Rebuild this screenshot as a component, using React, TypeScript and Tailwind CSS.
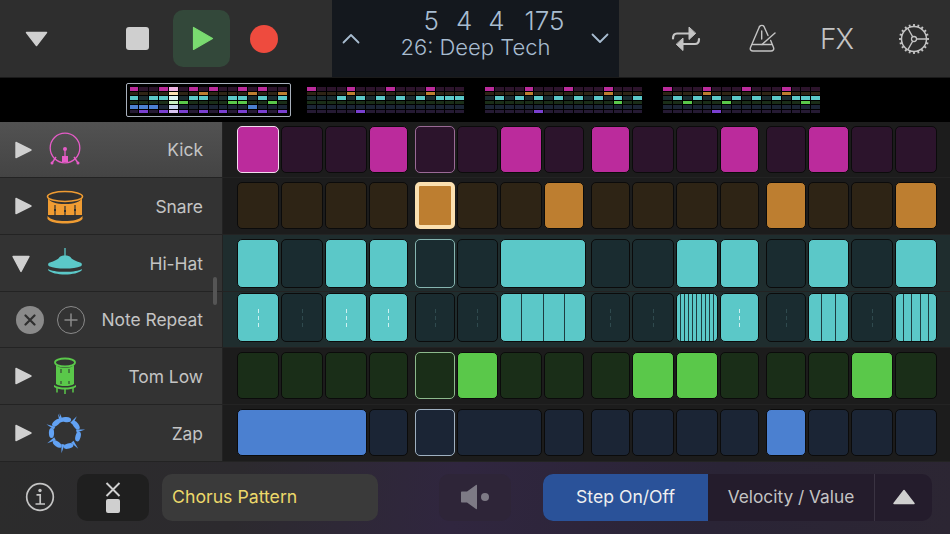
import React from "react";

type C = { on?: boolean; span?: number; sub?: number; sel?: boolean };

const themes = {
  kick: { on: "bg-[#bb2b9c]", off: "bg-[#2c142c]", ph: "border-[#9a6a96]" },
  snare: { on: "bg-[#bd7e30]", off: "bg-[#2e2415]", ph: "border-[#fbe0b0]" },
  hat: { on: "bg-[#5bc8c8]", off: "bg-[#1a2c30]", ph: "border-[#86b5b0]" },
  tom: { on: "bg-[#5ac84a]", off: "bg-[#1a2e18]", ph: "border-[#8cb98c]" },
  zap: { on: "bg-[#4b80d0]", off: "bg-[#1b2535]", ph: "border-[#9fb0c0]" },
};
type Theme = keyof typeof themes;

const groupCols = [
  "grid-cols-[42px_42px_42px_39px]",
  "grid-cols-[40px_41px_42px_40px]",
  "grid-cols-[39px_42px_42px_39px]",
  "grid-cols-[40px_41px_42px_42px]",
];

const spanClass: Record<number, string> = { 1: "", 2: "col-span-2", 3: "col-span-3" };

const on = (sub?: number): C => ({ on: true, sub });
const off = (sub?: number): C => ({ sub });

const rows: { theme: Theme; h: string; bg: string; pt: string; cellH: string; groups: C[][] }[] = [
  {
    theme: "kick", h: "h-[56px]", bg: "bg-[#1c1c1c]", pt: "pt-[4px]", cellH: "h-[47px]",
    groups: [
      [{ on: true, sel: true }, off(), off(), on()],
      [off(), off(), on(), off()],
      [on(), off(), off(), on()],
      [off(), on(), off(), off()],
    ],
  },
  {
    theme: "snare", h: "h-[57px]", bg: "bg-[#1c1c1c]", pt: "pt-[4px]", cellH: "h-[47px]",
    groups: [
      [off(), off(), off(), off()],
      [on(), off(), off(), on()],
      [off(), off(), off(), off()],
      [on(), off(), off(), on()],
    ],
  },
  {
    theme: "hat", h: "h-[57px]", bg: "bg-[#1f2d2e]", pt: "pt-[4px]", cellH: "h-[49px]",
    groups: [
      [on(), off(), on(), on()],
      [off(), off(), { on: true, span: 2 }],
      [off(), off(), on(), on()],
      [off(), on(), off(), on()],
    ],
  },
  {
    theme: "hat", h: "h-[56px]", bg: "bg-[#1f2d2e]", pt: "pt-[1px]", cellH: "h-[49px]",
    groups: [
      [on(1), off(1), on(1), on(1)],
      [{ sub: 1 }, off(1), { on: true, span: 2, sub: 4 }],
      [off(1), off(1), on(10), on(1)],
      [off(1), on(3), off(1), on(5)],
    ],
  },
  {
    theme: "tom", h: "h-[57px]", bg: "bg-[#1c1c1c]", pt: "pt-[4px]", cellH: "h-[47px]",
    groups: [
      [off(), off(), off(), off()],
      [off(), on(), off(), off()],
      [off(), on(), on(), off()],
      [off(), off(), on(), off()],
    ],
  },
  {
    theme: "zap", h: "h-[57px]", bg: "bg-[#1c1c1c]", pt: "pt-[4px]", cellH: "h-[47px]",
    groups: [
      [{ on: true, span: 3 }, off()],
      [off(), { span: 2 }, off()],
      [off(), off(), off(), off()],
      [on(), off(), off(), off()],
    ],
  },
];

function Divisions({ n, isOn }: { n: number; isOn: boolean }) {
  if (n === 1) {
    const dash = isOn ? "bg-[#cdf1f1]" : "bg-[#2f4a4e]";
    return (
      <div className="h-full flex flex-col items-center justify-center gap-[3px]">
        <div className={`w-px h-[4px] ${dash}`} />
        <div className={`w-px h-[4px] ${dash}`} />
        <div className={`w-px h-[4px] ${dash}`} />
      </div>
    );
  }
  return (
    <div className="h-full flex overflow-hidden rounded-[4px]">
      {Array.from({ length: n }).map((_, i) => (
        <div key={i} className={`flex-1 h-full ${i < n - 1 ? "border-r border-[#1d3c40]" : ""}`} />
      ))}
    </div>
  );
}

function Cell({ c, theme, playhead, h }: { c: C; theme: Theme; playhead: boolean; h: string }) {
  const t = themes[theme];
  const isSnarePh = playhead && theme === "snare";
  const border = c.sel
    ? "border-[1.5px] border-[#f2dcee]"
    : isSnarePh
    ? "border-[4px] border-[#fbe0b0]"
    : playhead
    ? `border-[1.5px] ${t.ph}`
    : "border border-[#0b0b0b]";
  const stretch = theme === "hat" && c.span === 2 ? "-mr-[2px]" : "";
  return (
    <div
      className={`${h} rounded-[5px] ${border} ${c.on ? t.on : t.off} ${spanClass[c.span ?? 1]} ${stretch}`}
    >
      {c.sub ? <Divisions n={c.sub} isOn={!!c.on} /> : null}
    </div>
  );
}

function Triangle({ down }: { down?: boolean }) {
  return (
    <svg width="20" height="20" viewBox="0 0 20 20" className={down ? "shrink-0 -ml-[2px] mr-[2px]" : "shrink-0"}>
      {down ? (
        <path d="M2 3.500h16L10 18.500z" fill="#d0d0d0" stroke="#d0d0d0" strokeWidth="1.400" strokeLinejoin="round" />
      ) : (
        <path d="M3 2.500v15L18 10z" fill="#d0d0d0" stroke="#d0d0d0" strokeWidth="1.400" strokeLinejoin="round" />
      )}
    </svg>
  );
}

function KickIcon() {
  return (
    <svg width="40" height="40" viewBox="0 0 40 40">
      <circle cx="20" cy="18" r="14.800" fill="none" stroke="#e65cc8" strokeWidth="1.300" />
      <circle cx="20" cy="19" r="2" fill="#e65cc8" />
      <path d="M20 20v6" stroke="#e65cc8" strokeWidth="1.300" />
      <path d="M17 26h6v6h-6z" fill="#e65cc8" />
      <path d="M11 27l-4 6M29 27l4 6" stroke="#e65cc8" strokeWidth="1.400" />
      <circle cx="7" cy="33" r="1.500" fill="#e65cc8" />
      <circle cx="33" cy="33" r="1.500" fill="#e65cc8" />
    </svg>
  );
}

function SnareIcon() {
  return (
    <svg width="40" height="40" viewBox="0 0 40 40">
      <ellipse cx="20" cy="10.500" rx="17.500" ry="5" fill="#2f2f2f" stroke="#f09c32" strokeWidth="1.600" />
      <path d="M3 12c2 4 8 6 17 6s15-2 17-6v17H3z" fill="#f09c32" />
      <path d="M2.500 30c3 4 10 5 17.500 5s14.500-1 17.500-5v3c-3 3.500-10 4.500-17.500 4.500S5.500 36.500 2.500 33z" fill="#f09c32" />
      <path d="M10 19v11M20 20v11M30 19v11" stroke="#2f2f2f" strokeWidth="1.200" />
      <path d="M9 24h2M19 25h2M29 24h2" stroke="#2f2f2f" strokeWidth="2" />
    </svg>
  );
}

function HatIcon() {
  return (
    <svg width="38" height="28" viewBox="0 0 40 30" className="-mt-[4px]">
      <path d="M19.300 1h1.400v9h-1.400z" fill="#5bc8c8" />
      <path d="M14 11c1-1.500 3-2 6-2s5 .5 6 2c1 2 5 4 11 6 1.500.7 1.500 3 0 3.500-4 1.500-10 2.500-17 2.500s-13-1-17-2.500c-1.500-.5-1.500-2.800 0-3.500 6-2 10-4 11-6z" fill="#5bc8c8" />
      <path d="M2 23.500c3 2 9 3 18 3s15-1 18-3v1.500c-3 3-10 4.500-18 4.500S5 28 2 25z" fill="#5bc8c8" />
    </svg>
  );
}

function TomIcon() {
  return (
    <svg width="24" height="40" viewBox="0 0 24 40">
      <ellipse cx="12" cy="6.500" rx="10" ry="4" fill="#333" stroke="#5ac84a" strokeWidth="1.800" />
      <path d="M3 9c2 2 5 3 9 3s7-1 9-3v19c-2 1.500-5 2-9 2s-7-.5-9-2z" fill="#5ac84a" />
      <path d="M8 13v4M16 13v4M8 25v3M16 25v3" stroke="#2f2f2f" strokeWidth="1" />
      <path d="M1 29c3 2 7 2.500 11 2.500s8-.5 11-2.500v2c-3 2-7 2.500-11 2.500S4 33 1 31z" fill="#5ac84a" />
      <path d="M4 32v4.500M12 33v5M20 32v4.500" stroke="#5ac84a" strokeWidth="1.500" />
    </svg>
  );
}

function ZapIcon() {
  const spikes = [-110, -55, -10, 50, 100, 150, 205, 255];
  const blobs = [-85, -35, 15, 75, 125, 180, 230];
  return (
    <svg width="42" height="42" viewBox="-21 -21 42 42">
      {blobs.map((a) => (
        <ellipse key={a} cx="13.500" cy="0" rx="2.600" ry="5" fill="#62a2f4" transform={`rotate(${a})`} />
      ))}
      {spikes.map((a) => (
        <path key={a} d="M11.500 -1.600L20.500 0L11.500 1.600z" fill="#62a2f4" transform={`rotate(${a})`} />
      ))}
    </svg>
  );
}

function RepeatIcon() {
  return (
    <svg width="30" height="26" viewBox="0 0 30 26" fill="none" stroke="#c4c4c4" strokeWidth="2.200" strokeLinecap="round" strokeLinejoin="round">
      <path d="M2 12.500c0-3 1.500-5 4-5h16" />
      <path d="M18 1.500v12l6.500-6z" fill="#c4c4c4" stroke="#c4c4c4" strokeWidth="1" />
      <path d="M28 13c0 3-1.500 5-4 5H8" />
      <path d="M12 12.500v12L5.500 18.500z" fill="#c4c4c4" stroke="#c4c4c4" strokeWidth="1" />
    </svg>
  );
}

function MetronomeIcon() {
  return (
    <svg width="30" height="30" viewBox="0 0 30 30" fill="none" stroke="#c4c4c4" strokeWidth="1.400" strokeLinecap="round" strokeLinejoin="round">
      <path d="M11.500 2.500c1.500-1.500 3.500-1.500 4.500 0l4 9" />
      <path d="M11.500 2.500L2.500 23.500c-.8 2 .5 3.500 2.500 3.500h18c2 0 3.300-1.500 2.500-3.500l-2.800-7" />
      <path d="M4.500 20.500h19" />
      <path d="M13.700 7v8" />
      <path d="M14 20.500L27 9" />
    </svg>
  );
}

function GearIcon() {
  const teeth = Array.from({ length: 20 }).map((_, i) => (i * 360) / 20);
  return (
    <svg width="32" height="32" viewBox="-16 -16 32 32" fill="none" stroke="#c4c4c4">
      <circle r="12.500" strokeWidth="1.500" />
      {teeth.map((a) => (
        <path key={a} d="M12.500 0H15" strokeWidth="1.800" transform={`rotate(${a})`} />
      ))}
      <circle r="2.500" strokeWidth="1.300" />
      <path d="M2.500 0H12.500M-1.250 -2.170L-6.250 -10.800M-1.250 2.170L-6.250 10.800" strokeWidth="1.300" />
    </svg>
  );
}

const miniColors = [
  { on: "bg-[#bb2b9c]", off: "bg-[#2c142c]", ph: "bg-[#f0b5e4]" },
  { on: "bg-[#bd7e30]", off: "bg-[#2e2415]", ph: "bg-[#fbe0b0]" },
  { on: "bg-[#5bc8c8]", off: "bg-[#1a2c30]", ph: "bg-[#e0f6f6]" },
  { on: "bg-[#5ac84a]", off: "bg-[#1a2e18]", ph: "bg-[#c8f0c0]" },
  { on: "bg-[#4b80d0]", off: "bg-[#1b2535]", ph: "bg-[#c8d4ee]" },
  { on: "bg-[#7a3fd0]", off: "bg-[#251a33]", ph: "bg-[#d8c4f0]" },
];

const patterns: number[][][] = [
  [
    [1, 4, 7, 9, 12, 14],
    [8, 13, 16],
    [1, 3, 4, 7, 8, 11, 12, 14, 16],
    [6, 11, 12, 15],
    [1, 2, 3, 13],
    [2, 4, 6, 8, 10, 12, 14, 16],
  ],
  [[1, 5, 9, 13], [5, 13], [4, 6, 8, 10, 12, 14, 15, 16], [], [], [6]],
  [[1, 5, 9, 13], [5, 13], [2, 4, 6, 8, 10, 12, 14, 16], [14], [], [6]],
  [[1, 5, 9, 13], [5, 13], [2, 4, 6, 8, 10, 12, 14, 15, 16], [3, 7, 15], [], [6]],
];

function Mini({ data, active }: { data: number[][]; active?: boolean }) {
  return (
    <div
      className={
        active
          ? "w-[165px] h-[34px] shrink-0 rounded-[2px] border-[1.5px] border-[#a8b0bc] flex flex-col justify-center gap-[1px] px-[2.5px]"
          : "w-[159px] h-[34px] shrink-0 flex flex-col justify-center gap-[1px]"
      }
    >
      {data.map((row, r) => (
        <div key={r} className="flex gap-[1px]">
          {Array.from({ length: 16 }).map((_, i) => {
            const col = i + 1;
            const cls =
              active && col === 5
                ? miniColors[r].ph
                : row.includes(col)
                ? miniColors[r].on
                : miniColors[r].off;
            return <div key={i} className={`w-[8.900px] h-[3.500px] ${cls}`} />;
          })}
        </div>
      ))}
    </div>
  );
}

const labels = [
  { name: "Kick", icon: <KickIcon /> },
  { name: "Snare", icon: <SnareIcon /> },
  { name: "Hi-Hat", icon: <HatIcon />, down: true },
  { name: "Note Repeat" },
  { name: "Tom Low", icon: <TomIcon /> },
  { name: "Zap", icon: <ZapIcon /> },
];

export default function App() {
  return (
    <div className="w-[950px] h-[534px] overflow-hidden bg-black flex flex-col font-['Inter','Liberation_Sans',sans-serif] text-[#c4c4c4]">
      {/* top bar */}
      <div className="h-[78px] shrink-0 bg-[#2e2e2e] border-b border-[#1a1a1a] flex items-center">
        <div className="w-[332px] h-full flex items-center pl-[25px]">
          <svg width="23" height="16" viewBox="0 0 23 16">
            <path d="M1.500 1.500h20L11.500 14.500z" fill="#cfcfcf" stroke="#cfcfcf" strokeWidth="1.500" strokeLinejoin="round" />
          </svg>
          <div className="ml-[78px] w-[23px] h-[23px] rounded-[3px] bg-[#cfcfcf]" />
          <div className="ml-[24px] w-[57px] h-[57px] rounded-[10px] bg-[#33483a] flex items-center justify-center">
            <svg width="22" height="25" viewBox="0 0 22 25" className="ml-[2px]">
              <path d="M1.500 1.500V23.500L20.500 12.500z" fill="#7adb70" stroke="#7adb70" strokeWidth="1.200" strokeLinejoin="round" />
            </svg>
          </div>
          <div className="ml-[20px] w-[28px] h-[28px] rounded-full bg-[#ee4b3e]" />
        </div>
        <div className="w-[287px] h-full bg-[#14181e] flex items-center text-[#a8bcd0] font-light">
          <svg width="18" height="11" viewBox="0 0 18 11" fill="none" stroke="#a8bcd0" strokeWidth="1.800" strokeLinecap="round" strokeLinejoin="round" className="ml-[10px] shrink-0">
            <path d="M1.500 9.500L9 2l7.500 7.500" />
          </svg>
          <div className="flex-1 flex flex-col items-center mb-[9px]">
            <div className="flex text-[26px] leading-[27px] h-[27px] pl-[37px]">
              <span>5</span>
              <span className="ml-[17px]">4</span>
              <span className="ml-[16px]">4</span>
              <span className="ml-[20px]">175</span>
            </div>
            <div className="text-[22px] leading-[27px] whitespace-nowrap">26: Deep Tech</div>
          </div>
          <svg width="18" height="11" viewBox="0 0 18 11" fill="none" stroke="#a8bcd0" strokeWidth="1.800" strokeLinecap="round" strokeLinejoin="round" className="mr-[10px] shrink-0">
            <path d="M1.500 1.500L9 9l7.500-7.500" />
          </svg>
        </div>
        <div className="flex-1 h-full flex items-center pl-[52px]">
          <RepeatIcon />
          <div className="ml-[47px]"><MetronomeIcon /></div>
          <div className="ml-[42px] text-[28px] font-light leading-none tracking-[-1px] w-[36px]">FX</div>
          <div className="ml-[42px]"><GearIcon /></div>
        </div>
      </div>

      {/* pattern strip */}
      <div className="h-[44px] shrink-0 bg-black flex items-start pt-[5px] pl-[126px]">
        <Mini data={patterns[0]} active />
        <div className="ml-[16px]"><Mini data={patterns[1]} /></div>
        <div className="ml-[19px]"><Mini data={patterns[2]} /></div>
        <div className="ml-[19px]"><Mini data={patterns[3]} /></div>
      </div>

      {/* rows */}
      <div className="relative">
        {rows.map((row, ri) => {
          const l = labels[ri];
          return (
            <div key={ri} className={`flex ${row.h} border-b border-[#232323]`}>
              <div
                className={`w-[223px] shrink-0 h-full border-r border-[#222] flex items-center pr-[19px] ${
                  ri === 0 ? "bg-[linear-gradient(#525252,#444444)]" : "bg-[#333333]"
                }`}
              >
                {l.icon ? (
                  <>
                    <div className="ml-[13px]"><Triangle down={l.down} /></div>
                    <div className="w-[56px] ml-[4px] flex justify-center">{l.icon}</div>
                  </>
                ) : (
                  <>
                    <div className="ml-[16px] w-[28px] h-[28px] rounded-full bg-[#8a8a8a] flex items-center justify-center">
                      <svg width="12" height="12" viewBox="0 0 12 12" stroke="#2e2e2e" strokeWidth="2.200" strokeLinecap="round">
                        <path d="M1.500 1.500l9 9M10.500 1.500l-9 9" />
                      </svg>
                    </div>
                    <div className="ml-[13px] w-[28px] h-[28px] rounded-full border-[1.500px] border-[#8a8a8a] flex items-center justify-center">
                      <svg width="14" height="14" viewBox="0 0 14 14" stroke="#8a8a8a" strokeWidth="1.500" strokeLinecap="round">
                        <path d="M7 1v12M1 7h12" />
                      </svg>
                    </div>
                  </>
                )}
                <div className="flex-1 text-right pt-[2px] text-[17.400px] whitespace-nowrap text-[#c4c4c4]">{l.name}</div>
              </div>
              <div className={`flex-1 h-full flex gap-x-[7px] pl-[14px] ${row.bg} ${row.pt}`}>
                {row.groups.map((g, gi) => {
                  return (
                    <div key={gi} className={`grid gap-x-[2px] h-fit ${groupCols[gi]}`}>
                      {g.map((c, ci) => (
                        <Cell
                          key={ci}
                          c={c}
                          theme={row.theme}
                          h={row.cellH}
                          playhead={gi === 1 && ci === 0 && ri !== 3}
                        />
                      ))}
                    </div>
                  );
                })}
              </div>
            </div>
          );
        })}
        <div className="absolute left-[213px] top-[155px] w-[4px] h-[28px] rounded-full bg-[#555555]" />
      </div>

      {/* bottom bar */}
      <div className="flex-1 flex items-center pb-[2px] bg-[linear-gradient(100deg,#2c2c2c_0%,#2c2a2e_25%,#30263f_48%,#2a2436_75%,#2c2633_100%)]">
        <svg width="30" height="30" viewBox="0 0 30 30" fill="none" stroke="#c4c4c4" className="ml-[25px] shrink-0">
          <circle cx="15" cy="15" r="13.300" strokeWidth="1.700" />
          <circle cx="15" cy="8.500" r="1.700" fill="#c4c4c4" stroke="none" />
          <path d="M11.500 12.800h3.700v9M10.500 22h9.500" strokeWidth="1.700" />
        </svg>
        <div className="ml-[22px] w-[72px] h-[47px] rounded-[10px] bg-[#1f1f1f] flex flex-col items-center justify-center gap-[2px]">
          <svg width="16" height="15" viewBox="0 0 16 15" stroke="#cfcfcf" strokeWidth="1.900">
            <path d="M1.500 1l13 13M14.500 1l-13 13" />
          </svg>
          <div className="w-[14px] h-[14px] rounded-[2px] bg-[#cfcfcf]" />
        </div>
        <div className="ml-[13px] w-[216px] h-[47px] rounded-[10px] bg-[#3a3a3a] flex items-center pl-[10px] text-[17.700px] text-[#ecd86a]">
          Chorus Pattern
        </div>
        <div className="ml-[61px] w-[72px] h-[47px] rounded-[10px] bg-[#2e2538] flex items-center justify-center">
          <svg width="30" height="26" viewBox="0 0 30 26" fill="#7d7a85">
            <path d="M2 7.500h5L16 1c.5-.4 1-.1 1 .5v23c0 .6-.5.9-1 .5L7 18.500H2c-.6 0-1-.4-1-1v-9c0-.6.4-1 1-1z" />
            <circle cx="25" cy="13" r="4" />
          </svg>
        </div>
        <div className="ml-[32px] w-[389px] h-[47px] rounded-[10px] overflow-hidden flex bg-[#241c2c]">
          <div className="w-[165px] bg-[#2a5299] text-[17.600px] text-[#f0f0f0] flex items-center justify-center">Step On/Off</div>
          <div className="w-[167px] border-r border-[#3a3342] flex items-center justify-center text-[17.300px] text-[#c4c4c4]">Velocity / Value</div>
          <div className="flex-1 flex items-center justify-center">
            <svg width="24" height="16" viewBox="0 0 24 16">
              <path d="M2 14.500h20L12 1.500z" fill="#cfcfcf" stroke="#cfcfcf" strokeWidth="1.500" strokeLinejoin="round" />
            </svg>
          </div>
        </div>
      </div>
    </div>
  );
}
